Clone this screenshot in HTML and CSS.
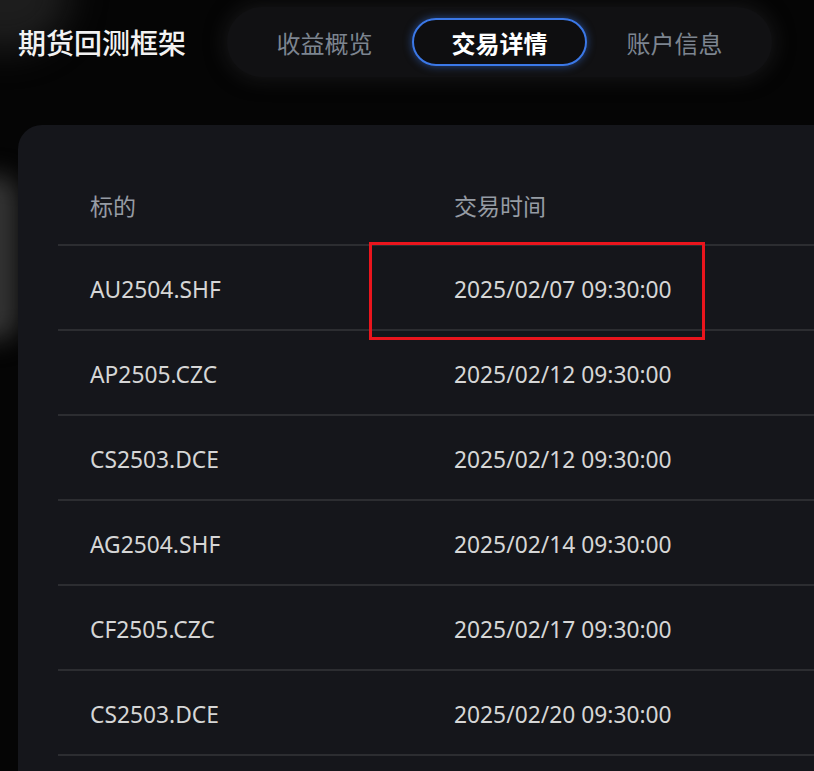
FILE: index.html
```html
<!DOCTYPE html>
<html lang="zh-CN">
<head>
<meta charset="utf-8">
<title>期货回测框架</title>
<link rel="stylesheet" href="styles.css">
</head>
<body>
<div class="bg-blob blob-a"></div>
<div class="bg-blob blob-b"></div>
<header class="topbar">
  <h1 class="title">期货回测框架</h1>
  <nav class="tabs">
    <a class="tab">收益概览</a>
    <a class="tab active">交易详情</a>
    <a class="tab">账户信息</a>
  </nav>
</header>
<main class="card">
  <table class="trades">
    <thead>
      <tr><th class="c1">标的</th><th class="c2">交易时间</th></tr>
    </thead>
    <tbody>
      <tr><td>AU2504.SHF</td><td>2025/02/07 09:30:00</td></tr>
      <tr><td>AP2505.CZC</td><td>2025/02/12 09:30:00</td></tr>
      <tr><td>CS2503.DCE</td><td>2025/02/12 09:30:00</td></tr>
      <tr><td>AG2504.SHF</td><td>2025/02/14 09:30:00</td></tr>
      <tr><td>CF2505.CZC</td><td>2025/02/17 09:30:00</td></tr>
      <tr><td>CS2503.DCE</td><td>2025/02/20 09:30:00</td></tr>
    </tbody>
  </table>
  <div class="highlight"></div>
</main>
</body>
</html>
```

FILE: styles.css
```css
html, body {
  margin: 0;
  padding: 0;
  height: 100%;
  overflow: hidden;
}
body {
  background: #050505;
  font-family: "Noto Sans", "Open Sans", "Noto Sans CJK SC", sans-serif;
  position: relative;
}
.bg-blob {
  position: absolute;
  pointer-events: none;
}
.blob-a {
  left: -60px;
  top: -60px;
  width: 130px;
  height: 110px;
  border-radius: 50%;
  filter: blur(18px);
  background: rgba(60, 60, 60, 0.45);
}
.blob-b {
  left: -30px;
  top: 175px;
  width: 48px;
  height: 165px;
  border-radius: 20px;
  filter: blur(12px);
  background: rgba(58, 58, 58, 0.9);
}
.topbar {
  position: relative;
  display: flex;
  align-items: center;
  padding: 7px 0 0 18px;
  gap: 41px;
}
.title {
  margin: 0;
  font-size: 28px;
  font-weight: 500;
  color: #f2f2f2;
  font-family: "Noto Sans CJK SC", sans-serif;
}
.tabs {
  display: flex;
  padding: 11px 10px;
  background: #111113;
  border-radius: 35px;
  box-shadow: 0 0 18px 4px rgba(30, 30, 32, 0.6);
}
.tab {
  box-sizing: border-box;
  width: 175px;
  height: 48px;
  display: flex;
  align-items: center;
  justify-content: center;
  font-family: "Noto Sans CJK SC", sans-serif;
  font-size: 24px;
  color: #7d8590;
  border-radius: 24px;
}
.tab.active {
  color: #ffffff;
  font-weight: 700;
  border: 2px solid #3b78e7;
  background: #0e0e10;
  box-shadow: 0 0 8px rgba(59, 120, 231, 0.55);
}
.card {
  position: relative;
  margin: 48px 0 0 18px;
  width: 900px;
  height: 680px;
  background: #15161b;
  border-radius: 24px 0 0 0;
  padding: 41px 0 0 40px;
  box-sizing: border-box;
}
.trades {
  border-collapse: collapse;
  width: 860px;
}
.trades th,
.trades td {
  text-align: left;
  padding: 0 0 0 32px;
  border-bottom: 2px solid #2c2d31;
}
.trades th {
  height: 77px;
  padding-bottom: 1px;
  font-family: "Noto Sans CJK SC", sans-serif;
  font-weight: 400;
  font-size: 23px;
  color: #969ca4;
}
.trades td {
  height: 80px;
  padding-top: 3px;
  font-size: 22.8px;
  color: #d6d6d6;
}
.trades .c1 {
  width: 332px;
}
.highlight {
  position: absolute;
  left: 351px;
  top: 117px;
  width: 336px;
  height: 98px;
  border: 3px solid #ea151d;
  box-sizing: border-box;
}
```
